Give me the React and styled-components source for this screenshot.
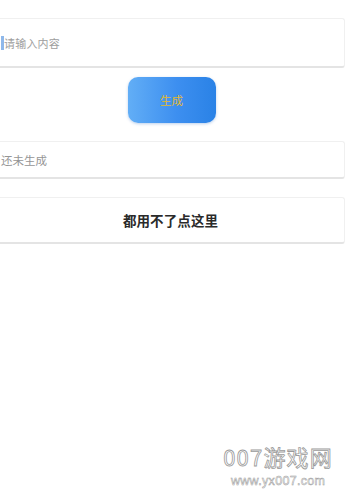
import React from "react";
import styled, { createGlobalStyle } from "styled-components";

const Global = createGlobalStyle`
  html, body { margin: 0; padding: 0; background: #fff; overflow: hidden; }
  body { font-family: "Noto Sans CJK SC", "Noto Sans", sans-serif; }
`;

const Screen = styled.div`
  position: relative;
  width: 346px;
  height: 496px;
  overflow: hidden;
  background: #ffffff;
`;

const Column = styled.div`
  display: flex;
  flex-direction: column;
  align-items: stretch;
  margin: 0 1px 0 -4px;
  padding-top: 18px;
`;

const Card = styled.div`
  box-sizing: border-box;
  height: ${(p) => p.$h}px;
  margin-bottom: ${(p) => p.$mb}px;
  background: #fff;
  border: 1px solid #f0f0f0;
  border-bottom: 2px solid #e4e4e4;
  border-radius: 3px;
  display: flex;
  align-items: center;
  justify-content: ${(p) => (p.$center ? "center" : "flex-start")};
  padding-left: ${(p) => p.$pl || 0}px;
`;

const Caret = styled.span`
  display: inline-block;
  width: 3px;
  height: 14px;
  background: #8fb8ea;
`;

const Placeholder = styled.span`
  font-size: 11px;
  color: #9e9e9e;
  letter-spacing: 0.2px;
`;

const Muted = styled.span`
  font-size: 11.5px;
  color: #959595;
`;

const Strong = styled.span`
  font-size: 13.5px;
  font-weight: 700;
  color: #2a2a2a;
  letter-spacing: 0.1px;
`;

const ButtonRow = styled.div`
  display: flex;
  justify-content: center;
  padding-left: 2px;
  margin-bottom: 18px;
`;

const GenButton = styled.button`
  width: 88px;
  height: 46px;
  border: none;
  border-radius: 10px;
  background: linear-gradient(90deg, #62aef6 0%, #3d8ff0 55%, #2a82e6 100%);
  box-shadow: 0 1px 3px rgba(60, 120, 200, 0.35);
  color: #e2b833;
  font-family: "Noto Sans CJK SC", sans-serif;
  font-size: 11.5px;
  padding: 0;
`;

const Watermark = styled.div`
  position: absolute;
  right: 13px;
  bottom: 9px;
  display: flex;
  flex-direction: column;
  align-items: center;
  color: #fff;
  -webkit-text-stroke: 0.8px #9a9a9a;
`;

const MarkTitle = styled.div`
  font-family: "Noto Sans CJK SC", sans-serif;
  font-size: 22px;
  line-height: 20px;
  letter-spacing: 1.2px;
  margin-bottom: 9px;
`;

const MarkUrl = styled.div`
  font-family: "Liberation Sans", sans-serif;
  font-size: 12.5px;
  line-height: 12px;
  -webkit-text-stroke: 0.5px #9a9a9a;
  letter-spacing: 0.3px;
`;

export default function App() {
  return (
    <Screen>
      <Global />
      <Column>
        <Card $h={50} $mb={9} $pl={4}>
          <Caret />
          <Placeholder>请输入内容</Placeholder>
        </Card>
        <ButtonRow>
          <GenButton>生成</GenButton>
        </ButtonRow>
        <Card $h={38} $mb={18} $pl={4}>
          <Muted>还未生成</Muted>
        </Card>
        <Card $h={47} $mb={0} $center>
          <Strong>都用不了点这里</Strong>
        </Card>
      </Column>
      <Watermark>
        <MarkTitle>007游戏网</MarkTitle>
        <MarkUrl>www.yx007.com</MarkUrl>
      </Watermark>
    </Screen>
  );
}
